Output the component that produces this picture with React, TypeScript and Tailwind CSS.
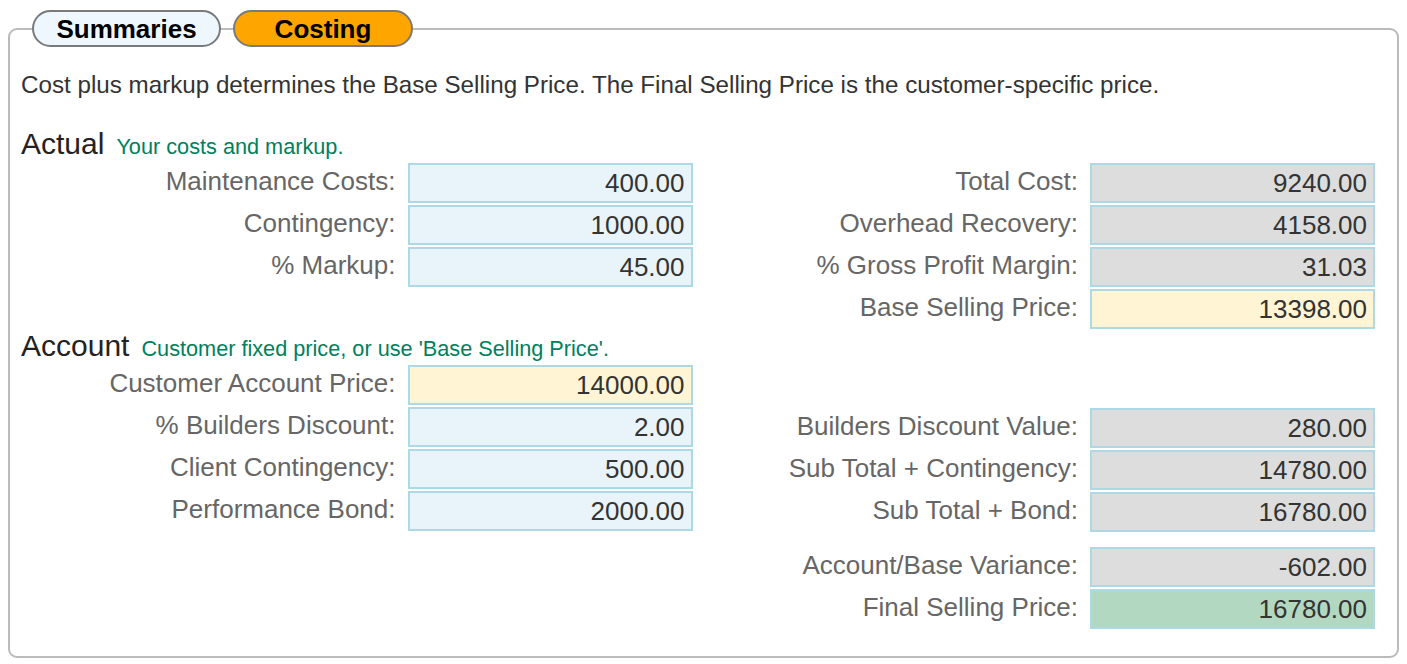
import React from "react";

type Tone = "blue" | "grey" | "yellow" | "green";

interface Field {
  label: string;
  value: string;
  tone: Tone;
}

const toneClass: Record<Tone, string> = {
  blue: "bg-[#e8f4f9]",
  grey: "bg-[#dddddd]",
  yellow: "bg-[#fff5d5]",
  green: "bg-[#b3d8c1]",
};

const actualLeft: Field[] = [
  { label: "Maintenance Costs:", value: "400.00", tone: "blue" },
  { label: "Contingency:", value: "1000.00", tone: "blue" },
  { label: "% Markup:", value: "45.00", tone: "blue" },
];

const actualRight: Field[] = [
  { label: "Total Cost:", value: "9240.00", tone: "grey" },
  { label: "Overhead Recovery:", value: "4158.00", tone: "grey" },
  { label: "% Gross Profit Margin:", value: "31.03", tone: "grey" },
  { label: "Base Selling Price:", value: "13398.00", tone: "yellow" },
];

const accountLeft: Field[] = [
  { label: "Customer Account Price:", value: "14000.00", tone: "yellow" },
  { label: "% Builders Discount:", value: "2.00", tone: "blue" },
  { label: "Client Contingency:", value: "500.00", tone: "blue" },
  { label: "Performance Bond:", value: "2000.00", tone: "blue" },
];

const accountRight: Field[] = [
  { label: "Builders Discount Value:", value: "280.00", tone: "grey" },
  { label: "Sub Total + Contingency:", value: "14780.00", tone: "grey" },
  { label: "Sub Total + Bond:", value: "16780.00", tone: "grey" },
];

const finalRows: Field[] = [
  { label: "Account/Base Variance:", value: "-602.00", tone: "grey" },
  { label: "Final Selling Price:", value: "16780.00", tone: "green" },
];

function Row({ field }: { field: Field }) {
  return (
    <div className="flex items-center gap-[12px] mr-[11px]">
      <label className="flex-1 text-right text-[26px] leading-[30px] pb-[4px] text-[#666666] whitespace-nowrap">
        {field.label}
      </label>
      <div
        className={`w-[285px] h-[40px] border-2 border-[#add8e6] ${toneClass[field.tone]} text-right pr-[6px] text-[26px] leading-[36px] text-[#333333]`}
      >
        {field.value}
      </div>
    </div>
  );
}

function Heading({ title, note }: { title: string; note: string }) {
  return (
    <div className="flex items-baseline h-[36px]">
      <span className="text-[30px] leading-[34px] text-[#222222]">{title}</span>
      <span className="ml-[12px] text-[21.7px] text-[#00805c]">{note}</span>
    </div>
  );
}

export default function App() {
  return (
    <div className="px-[8px] pt-[10px] font-['Liberation_Sans',Arial,sans-serif] bg-white min-h-[664px]">
      <div className="relative z-10 flex gap-[12px] ml-[24px]">
        <div className="w-[189px] h-[37px] rounded-full border-2 border-[#7a7a7a] bg-[#eef7fe] text-center font-bold text-[26px] leading-[35px] text-black">
          Summaries
        </div>
        <div className="w-[180px] h-[37px] rounded-full border-2 border-[#7a7a7a] bg-[#ffa500] text-center font-bold text-[26px] leading-[35px] text-black">
          Costing
        </div>
      </div>

      <div className="-mt-[19px] h-[630px] border-2 border-[#bbbbbb] rounded-[9px] px-[11px] pt-[41px]">
        <p className="text-[24.2px] leading-[28px] text-[#333333] whitespace-nowrap">
          Cost plus markup determines the Base Selling Price. The Final Selling Price is the customer-specific price.
        </p>

        <div className="mt-[28px]">
          <Heading title="Actual" note="Your costs and markup." />
          <div className="grid grid-cols-2">
            <div className="flex flex-col gap-[2px]">
              {actualLeft.map((f) => (
                <Row key={f.label} field={f} />
              ))}
            </div>
            <div className="flex flex-col gap-[2px]">
              {actualRight.map((f) => (
                <Row key={f.label} field={f} />
              ))}
            </div>
          </div>
        </div>

        <div>
          <Heading title="Account" note="Customer fixed price, or use 'Base Selling Price'." />
          <div className="grid grid-cols-2">
            <div className="flex flex-col gap-[2px]">
              {accountLeft.map((f) => (
                <Row key={f.label} field={f} />
              ))}
            </div>
            <div className="flex flex-col gap-[2px]">
              <div className="h-[41px]" />
              {accountRight.map((f) => (
                <Row key={f.label} field={f} />
              ))}
              <div className="mt-[13px] flex flex-col gap-[2px]">
                {finalRows.map((f) => (
                  <Row key={f.label} field={f} />
                ))}
              </div>
            </div>
          </div>
        </div>
      </div>
    </div>
  );
}
